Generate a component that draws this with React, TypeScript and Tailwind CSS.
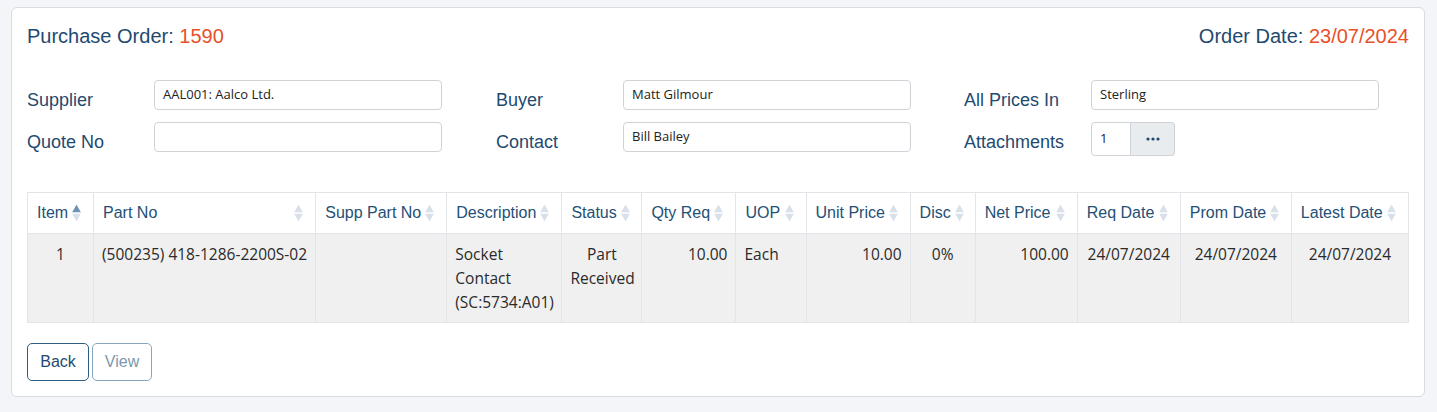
import React from "react";

const SortIcon = ({ active }: { active?: boolean }) => (
  <svg width="9" height="18" viewBox="0 0 9 18" className="shrink-0">
    <path d="M4.5 0.5 L8.8 8.2 L0.2 8.2 Z" fill={active ? "#6f93b5" : "#d8e0e9"} />
    <path d="M4.5 17.5 L8.8 9.8 L0.2 9.8 Z" fill="#d8e0e9" />
  </svg>
);

const cols: { label: string; w: number; align: string; active?: boolean }[] = [
  { label: "Item", w: 66, align: "text-center", active: true },
  { label: "Part No", w: 222, align: "text-left" },
  { label: "Supp Part No", w: 131, align: "text-left" },
  { label: "Description", w: 115, align: "text-left" },
  { label: "Status", w: 80, align: "text-center" },
  { label: "Qty Req", w: 94, align: "text-right" },
  { label: "UOP", w: 70, align: "text-left" },
  { label: "Unit Price", w: 104, align: "text-right" },
  { label: "Disc", w: 65, align: "text-center" },
  { label: "Net Price", w: 102, align: "text-right" },
  { label: "Req Date", w: 103, align: "text-center" },
  { label: "Prom Date", w: 111, align: "text-center" },
  { label: "Latest Date", w: 117, align: "text-center" },
];

const row: React.ReactNode[] = [
  "1",
  "(500235) 418-1286-2200S-02",
  "",
  <>Socket<br />Contact<br />(SC:5734:A01)</>,
  <>Part<br />Received</>,
  "10.00",
  "Each",
  "10.00",
  "0%",
  "100.00",
  "24/07/2024",
  "24/07/2024",
  "24/07/2024",
];

const Label = ({ children }: { children: React.ReactNode }) => (
  <div className="w-[127px] shrink-0 pt-[9px] text-[18px] leading-[22px] text-[#1f4a70]">{children}</div>
);

const Input = ({ value }: { value: string }) => (
  <div className="w-[288px] h-[30px] border border-[#cfd3d8] rounded-[4px] bg-white px-[8px] flex items-center text-[13px] text-[#222] font-['Open_Sans',sans-serif]">
    {value}
  </div>
);

export default function App() {
  return (
    <div className="min-h-[412px] bg-[#f4f5f8] pt-[7px] pl-[11px] pr-[12px] pb-[15px] font-['Liberation_Sans',Arial,sans-serif]">
      <div className="bg-white border border-[#d8dce2] rounded-[6px] px-[15px] pt-[14px] pb-[15px]">
        <div className="flex justify-between items-center h-[28px] text-[20px]">
          <div className="text-[#1f4a70]">
            Purchase Order: <span className="text-[#e8502a]">1590</span>
          </div>
          <div className="text-[#1f4a70]">
            Order Date: <span className="text-[#e8502a]">23/07/2024</span>
          </div>
        </div>

        <div className="mt-[30px] grid grid-cols-[469px_468px_1fr]">
          <div className="flex flex-col gap-[11px]">
            <div className="flex"><Label>Supplier</Label><Input value="AAL001: Aalco Ltd." /></div>
            <div className="flex"><Label>Quote No</Label><Input value="" /></div>
          </div>
          <div className="flex flex-col gap-[11px]">
            <div className="flex"><Label>Buyer</Label><Input value="Matt Gilmour" /></div>
            <div className="flex"><Label>Contact</Label><Input value="Bill Bailey" /></div>
          </div>
          <div className="flex flex-col gap-[11px]">
            <div className="flex"><Label>All Prices In</Label><Input value="Sterling" /></div>
            <div className="flex">
              <Label>Attachments</Label>
              <div className="flex h-[34px]">
                <div className="w-[40px] border border-[#cfd3d8] rounded-l-[4px] bg-white px-[8px] flex items-center text-[13px] text-[#222] font-['Open_Sans',sans-serif]">1</div>
                <div className="w-[44px] border border-l-0 border-[#cfd3d8] rounded-r-[4px] bg-[#e9ecef] flex items-center justify-center">
                  <svg width="14" height="4" viewBox="0 0 14 4">
                    <circle cx="2" cy="2" r="1.6" fill="#1f4a70" />
                    <circle cx="7" cy="2" r="1.6" fill="#1f4a70" />
                    <circle cx="12" cy="2" r="1.6" fill="#1f4a70" />
                  </svg>
                </div>
              </div>
            </div>
          </div>
        </div>

        <table className="mt-[36px] w-full table-fixed border-collapse border border-[#e1e4e8]">
          <colgroup>
            {cols.map((c, i) => (
              <col key={i} style={{ width: c.w }} />
            ))}
          </colgroup>
          <thead>
            <tr className="h-[41px]">
              {cols.map((c, i) => (
                <th key={i} className="border border-[#e1e4e8] pl-[9px] pr-[12px] font-normal text-[16px] text-[#245075]">
                  <div className="flex items-center justify-between gap-[4px]">
                    <span className="whitespace-nowrap">{c.label}</span>
                    <SortIcon active={c.active} />
                  </div>
                </th>
              ))}
            </tr>
          </thead>
          <tbody>
            <tr className="h-[89px] bg-[#f0f0f0]">
              {row.map((v, i) => (
                <td
                  key={i}
                  className={`border border-[#e1e4e8] px-[8px] pt-[8px] align-top text-[15.5px] leading-[24px] text-[#2a2a2a] font-['Open_Sans',sans-serif] ${cols[i].align}`}
                >
                  {v}
                </td>
              ))}
            </tr>
          </tbody>
        </table>

        <div className="mt-[20px] flex gap-[3px]">
          <button className="h-[38px] w-[62px] border border-[#2f5d80] rounded-[5px] text-[16px] text-[#1f4a70] bg-white">Back</button>
          <button className="h-[38px] w-[60px] border border-[#8aa6bd] rounded-[5px] text-[16px] text-[#7d97ad] bg-white">View</button>
        </div>
      </div>
    </div>
  );
}
